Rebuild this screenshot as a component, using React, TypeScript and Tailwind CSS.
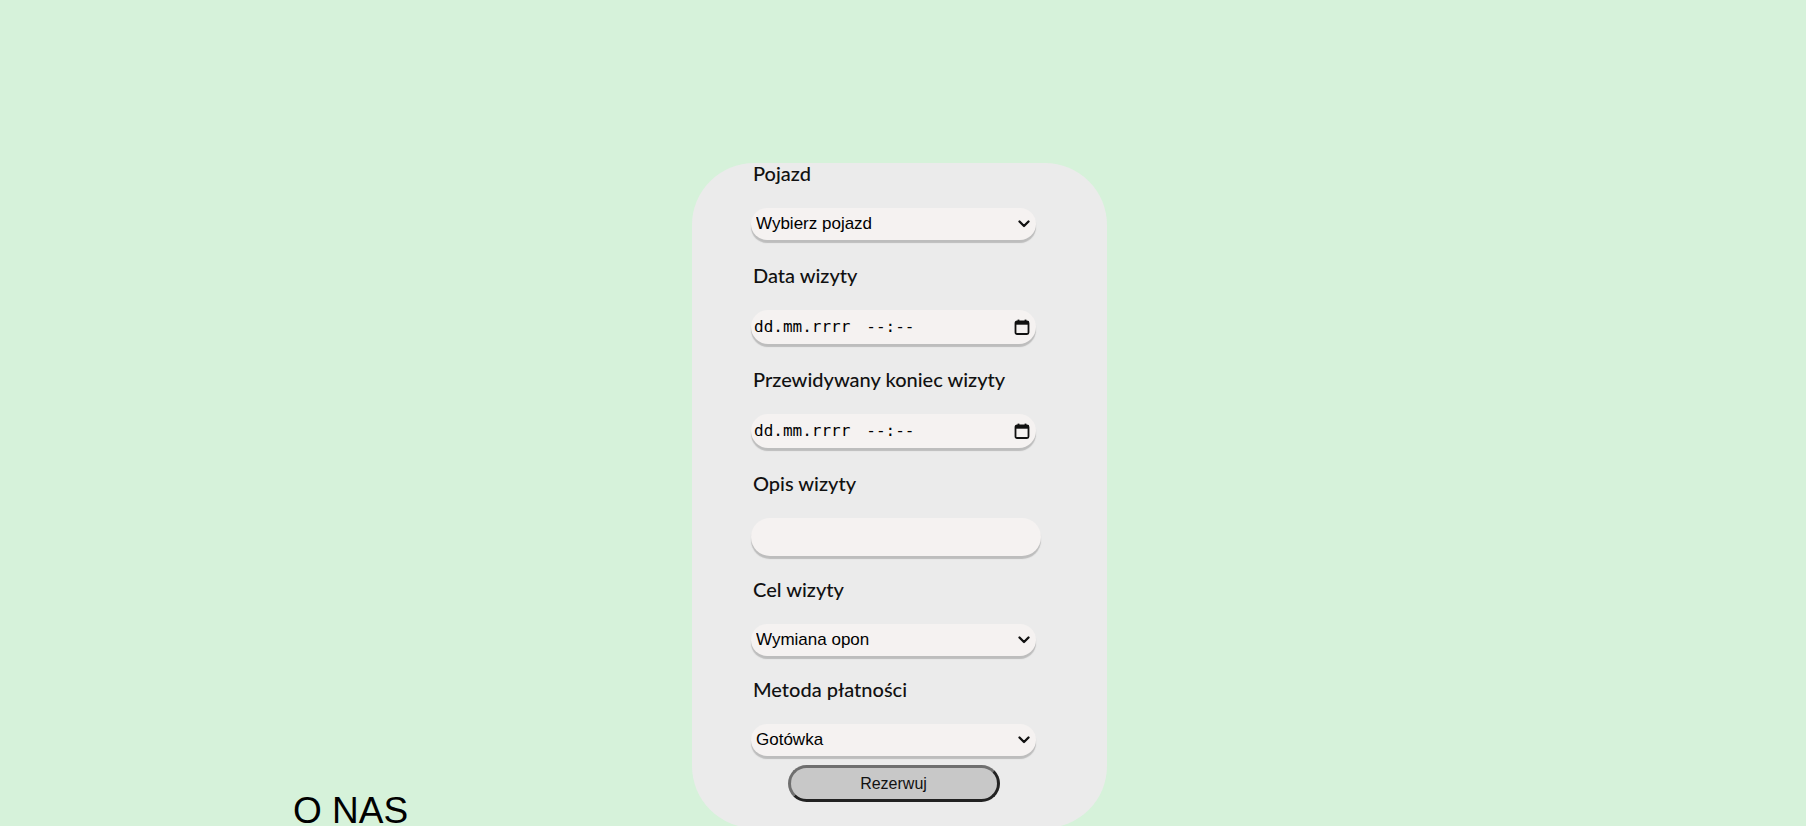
import { ReactNode } from 'react';

const labelFont = { fontFamily: 'Lato, "Noto Sans", sans-serif' };

function Label({ children }: { children: ReactNode }) {
  return (
    <label
      className="block h-[24px] text-[20px] font-medium leading-[20px] text-[#111] pl-[2px] mb-[21px]"
      style={labelFont}
    >
      {children}
    </label>
  );
}

function Chevron() {
  return (
    <svg width="12" height="8" viewBox="0 0 12 8" className="pointer-events-none absolute right-[6px] top-[12px]">
      <path d="M1.5 1.5 L6 6 L10.5 1.5" fill="none" stroke="#111" strokeWidth="2.3" strokeLinecap="round" strokeLinejoin="round" />
    </svg>
  );
}

function CalendarIcon() {
  return (
    <svg width="16" height="16" viewBox="0 0 16 16">
      <rect x="1.5" y="2.5" width="13" height="12.5" rx="1.5" fill="none" stroke="#111" strokeWidth="1.8" />
      <rect x="1.5" y="2.5" width="13" height="3.2" fill="#111" />
      <rect x="3.6" y="0.6" width="1.8" height="3" fill="#111" />
      <rect x="10.6" y="0.6" width="1.8" height="3" fill="#111" />
    </svg>
  );
}

function SelectField({ value, options }: { value: string; options: string[] }) {
  return (
    <div className="relative w-[285px]">
      <select
        defaultValue={value}
        className="block w-full h-[32px] appearance-none rounded-full bg-[#f5f2f1] pl-[5px] pr-[24px] text-[17px] text-black shadow-[0_3px_1px_#bdbdbd] outline-none"
        style={{ fontFamily: '"Liberation Sans", Arial, sans-serif' }}
      >
        {options.map((o) => (
          <option key={o}>{o}</option>
        ))}
      </select>
      <Chevron />
    </div>
  );
}

function DateField() {
  return (
    <div className="flex h-[34px] w-[285px] items-center justify-between rounded-full bg-[#f5f2f1] pl-[3px] pr-[6px] shadow-[0_3px_1px_#bdbdbd]">
      <span className="flex gap-[16px] text-[16px] text-black" style={{ fontFamily: '"DejaVu Sans Mono", "Liberation Mono", monospace' }}>
        <span>dd.mm.rrrr</span>
        <span>--:--</span>
      </span>
      <CalendarIcon />
    </div>
  );
}

export default function App() {
  return (
    <div className="h-[826px] w-full overflow-hidden bg-[#d6f2da]">
      <div className="flex pt-[163px]">
        <div className="flex w-[692px] shrink-0 items-end pl-[293px]">
          <h2 className="text-[37px] leading-[34px] text-black" style={{ fontFamily: '"Liberation Sans", Arial, sans-serif' }}>
            O NAS
          </h2>
        </div>
        <div className="h-[665px] w-[415px] shrink-0 rounded-[62px] bg-[#ebebeb] px-[59px]">
          <form className="flex w-[285px] flex-col" onSubmit={(e) => e.preventDefault()}>
            <Label>Pojazd</Label>
            <SelectField value="Wybierz pojazd" options={['Wybierz pojazd']} />
            <div className="h-[25px]" />
            <Label>Data wizyty</Label>
            <DateField />
            <div className="h-[25px]" />
            <Label>Przewidywany koniec wizyty</Label>
            <DateField />
            <div className="h-[25px]" />
            <Label>Opis wizyty</Label>
            <input
              type="text"
              className="block h-[38px] w-[290px] rounded-full bg-[#f5f2f1] px-3 shadow-[0_3px_1px_#bdbdbd] outline-none"
            />
            <div className="h-[23px]" />
            <Label>Cel wizyty</Label>
            <SelectField value="Wymiana opon" options={['Wymiana opon', 'Przegląd', 'Naprawa']} />
            <div className="h-[23px]" />
            <Label>Metoda płatności</Label>
            <SelectField value="Gotówka" options={['Gotówka', 'Karta']} />
            <button
              type="submit"
              className="mx-auto mt-[9px] h-[37px] w-[212px] rounded-full border-[3px] border-t-[#6f6f6f] border-l-[#6f6f6f] border-r-[#222] border-b-[#222] bg-[#c8c8c8] text-[16px] text-[#111]"
              style={{ fontFamily: '"Liberation Sans", Arial, sans-serif' }}
            >
              Rezerwuj
            </button>
          </form>
        </div>
      </div>
    </div>
  );
}
